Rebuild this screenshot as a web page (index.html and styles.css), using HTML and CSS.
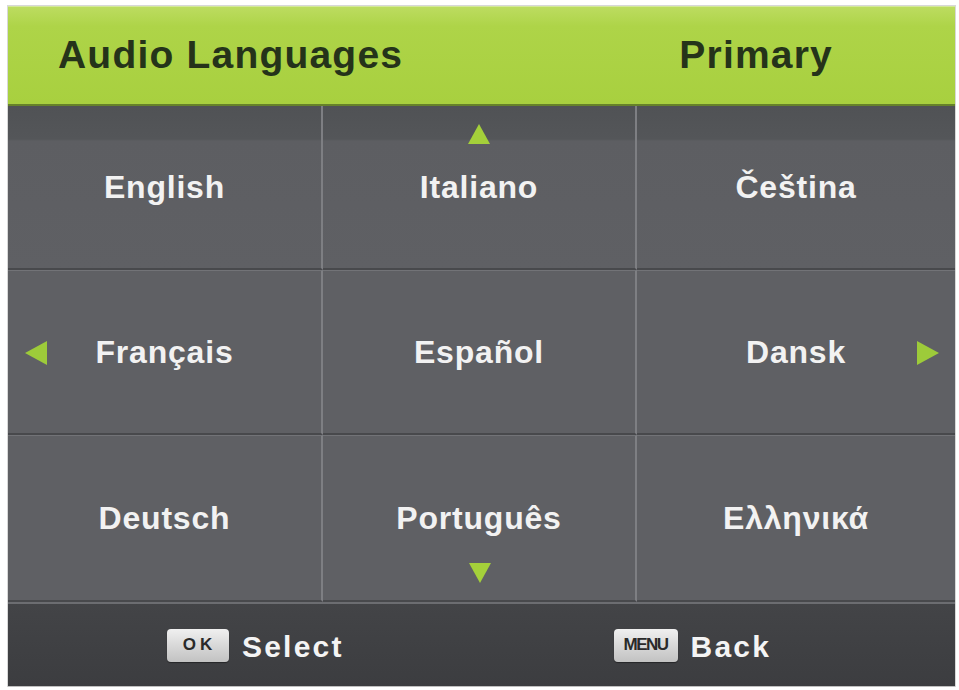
FILE: index.html
```html
<!DOCTYPE html>
<html lang="en">
<head>
<meta charset="utf-8">
<title>Audio Languages</title>
<link rel="stylesheet" href="styles.css">
</head>
<body>
<div class="panel">
  <header class="head">
    <span class="title">Audio Languages</span>
    <span class="mode">Primary</span>
  </header>
  <div class="grid">
    <div class="cell r1">English</div>
    <div class="cell r1">Italiano<span class="arrow up"></span></div>
    <div class="cell r1 last">Čeština</div>
    <div class="cell r2">Français<span class="arrow left"></span></div>
    <div class="cell r2">Español</div>
    <div class="cell r2 last">Dansk<span class="arrow right"></span></div>
    <div class="cell r3">Deutsch</div>
    <div class="cell r3">Português<span class="arrow down"></span></div>
    <div class="cell r3 last">Ελληνικά</div>
  </div>
  <footer class="foot">
    <div class="hint"><span class="key ok">OK</span><span class="label">Select</span></div>
    <div class="hint"><span class="key menu">MENU</span><span class="label">Back</span></div>
  </footer>
</div>
</body>
</html>
```
FILE: styles.css
```css
html, body {
  margin: 0;
  padding: 0;
  background: #ffffff;
}
body {
  font-family: "Liberation Sans", Arial, sans-serif;
  font-weight: bold;
}
.panel {
  margin: 6px 0 0 8px;
  width: 947px;
  height: 681px;
  display: flex;
  flex-direction: column;
  background: #5e5f63;
  box-shadow: 0 0 0 1px #d8d8d8;
}
.head {
  height: 97px;
  flex: none;
  display: flex;
  align-items: center;
  justify-content: space-between;
  padding: 0 122px 0 50px;
  background: linear-gradient(#bcdc60 0, #aed448 20%, #a8d03f 100%);
  border-top: 1px solid #d3e89a;
  border-bottom: 2px solid #66822a;
  color: #25331a;
  font-size: 39px;
  letter-spacing: 1.2px;
}
.head span {
  position: relative;
  top: -1px;
}
.grid {
  flex: none;
  display: grid;
  grid-template-columns: 315px 314px 318px;
  grid-template-rows: 164px 165px 167px;
}
.cell {
  position: relative;
  display: flex;
  align-items: center;
  justify-content: center;
  color: #f2f2f2;
  font-size: 32px;
  letter-spacing: 0.8px;
  background: #5f6064;
  border-right: 2px solid #7e7f83;
  border-top: 1px solid #727377;
  border-bottom: 2px solid #48494c;
  box-sizing: border-box;
}
.cell.last {
  border-right: none;
}
.cell.r1 {
  border-top: none;
  background: linear-gradient(#505255 0, #545659 33px, #5d5e62 35px, #5f6064 100%);
}
.arrow {
  position: absolute;
  width: 0;
  height: 0;
}
.arrow.up {
  top: 18px;
  left: 50%;
  margin-left: -11px;
  border-left: 11px solid transparent;
  border-right: 11px solid transparent;
  border-bottom: 20px solid #a4d03a;
}
.arrow.down {
  bottom: 17px;
  left: 50%;
  margin-left: -10px;
  border-left: 11px solid transparent;
  border-right: 11px solid transparent;
  border-top: 20px solid #a4d03a;
}
.arrow.left {
  left: 17px;
  top: 50%;
  margin-top: -11px;
  border-top: 12px solid transparent;
  border-bottom: 12px solid transparent;
  border-right: 22px solid #9dcb3a;
}
.arrow.right {
  right: 16px;
  top: 50%;
  margin-top: -11px;
  border-top: 12px solid transparent;
  border-bottom: 12px solid transparent;
  border-left: 22px solid #9dcb3a;
}
.foot {
  flex: 1;
  display: flex;
  align-items: center;
  gap: 270px;
  padding-left: 159px;
  background: linear-gradient(#434447, #3c3d40);
  border-top: 2px solid #6c6d71;
  border-bottom: 1px solid #bfbfbf;
}
.hint {
  display: flex;
  align-items: center;
  gap: 13px;
}
.label {
  color: #f4f4f4;
  font-size: 30px;
  letter-spacing: 2.2px;
  position: relative;
  top: 2px;
}
.key {
  display: flex;
  align-items: center;
  justify-content: center;
  height: 33px;
  border-radius: 4px;
  background: linear-gradient(#f0f0f0, #d6d6d6 55%, #c2c2c2);
  color: #2a2a2a;
  box-shadow: 0 1px 1px rgba(0,0,0,0.4);
}
.key.ok {
  width: 62px;
  font-size: 17px;
  letter-spacing: 4px;
  padding-left: 3px;
  box-sizing: border-box;
}
.key.menu {
  width: 64px;
  font-size: 17px;
  letter-spacing: -1.5px;
}
```
